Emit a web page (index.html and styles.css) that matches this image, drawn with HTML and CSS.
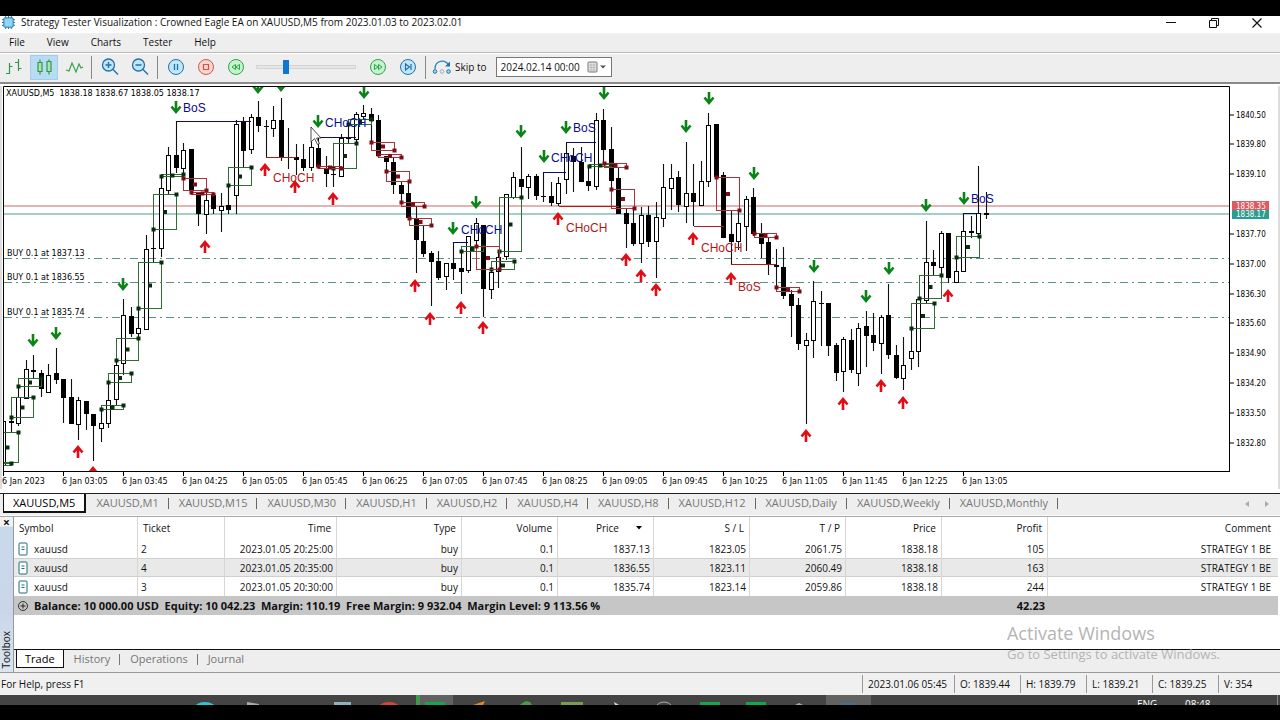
FILE: index.html
```html
<!DOCTYPE html>
<html lang="en">
<head>
<meta charset="utf-8">
<title>Strategy Tester Visualization</title>
<link rel="stylesheet" href="styles.css">
</head>
<body>
<div class="window">
  <header class="titlebar">
    <svg class="app-icon" viewBox="0 0 14 14"><path d="M4 0v14M7 0v14M10 0v14M0 4h14M0 7h14M0 10h14" stroke="#1b6c9c" stroke-width="1"/><rect x="2" y="2" width="10" height="10" rx="1" fill="#8fd6f5" stroke="#1d75a8"/></svg>
    <h1 class="title">Strategy Tester Visualization : Crowned Eagle EA on XAUUSD,M5 from 2023.01.03 to 2023.02.01</h1>
    <div class="window-buttons">
      <button class="win-btn" aria-label="Minimize"><svg viewBox="0 0 12 12"><path d="M1 5.500h10" stroke="#111"/></svg></button>
      <button class="win-btn" aria-label="Restore"><svg viewBox="0 0 12 12"><path d="M1.500 3.500h7v7h-7zM3.500 3.500v-2h7v7h-2" fill="none" stroke="#111"/></svg></button>
      <button class="win-btn" aria-label="Close"><svg viewBox="0 0 12 12"><path d="M1.500 1.500l9 9M10.500 1.500l-9 9" stroke="#111" stroke-width="1.200"/></svg></button>
    </div>
  </header>
  <nav class="menu">
    <button>File</button><button>View</button><button>Charts</button><button>Tester</button><button>Help</button>
  </nav>
  <div class="toolbar">
    <button class="tool" aria-label="Bar chart"><svg viewBox="0 0 20 20"><path d="M5.500 6v11M2 16.500h3M5.500 9.500h3M14.500 2v12M11 5.500h3M14.500 11.500h3" fill="none" stroke="#2f9a45" stroke-width="1.200"/></svg></button>
    <button class="tool active" aria-label="Candlesticks"><svg viewBox="0 0 20 20"><path d="M6 2.500v3M6 14.500v3M15 2.500v2M15 14.500v3M4 5.500h4v9H4zM13 4.500h4v10h-4z" fill="#a9e3b8" stroke="#2f9a45" stroke-width="1.200"/></svg></button>
    <button class="tool" aria-label="Line chart"><svg viewBox="0 0 20 20"><path d="M2 13l3 1 3-8 4 9 3-8 2 4 2-1" fill="none" stroke="#35a04b" stroke-width="1.200"/></svg></button>
    <span class="sep"></span>
    <button class="tool" aria-label="Zoom in"><svg viewBox="0 0 20 20"><circle cx="8.500" cy="8" r="6" fill="#bfe6fb" stroke="#2272a8" stroke-width="1.300"/><path d="M13 12.500l5 5M5.500 8h6M8.500 5v6" stroke="#2272a8" stroke-width="1.400"/></svg></button>
    <button class="tool" aria-label="Zoom out"><svg viewBox="0 0 20 20"><circle cx="8.500" cy="8" r="6" fill="#bfe6fb" stroke="#2272a8" stroke-width="1.300"/><path d="M13 12.500l5 5M5.500 8h6" stroke="#2272a8" stroke-width="1.400"/></svg></button>
    <span class="sep"></span>
    <button class="tool" aria-label="Pause"><svg viewBox="0 0 20 20"><circle cx="10" cy="10" r="7.500" fill="#bfe6fb" stroke="#2272a8"/><path d="M8.500 7v6M11.500 7v6" stroke="#2272a8" stroke-width="1.300"/></svg></button>
    <button class="tool" aria-label="Stop"><svg viewBox="0 0 20 20"><circle cx="10" cy="10" r="7.500" fill="#fbd5cf" stroke="#d2564b"/><path d="M7.500 7.500h5v5h-5z" fill="none" stroke="#d2564b" stroke-width="1.200"/></svg></button>
    <button class="tool" aria-label="Slower"><svg viewBox="0 0 20 20"><circle cx="10" cy="10" r="7.500" fill="#c4f3cd" stroke="#31a449"/><path d="M9.500 7.500v5l-3.500-2.500zM13.500 7.500v5L10 10z" fill="none" stroke="#31a449"/></svg></button>
    <input class="speed" type="range" min="0" max="100" value="28" aria-label="Speed">
    <button class="tool" aria-label="Faster"><svg viewBox="0 0 20 20"><circle cx="10" cy="10" r="7.500" fill="#c4f3cd" stroke="#31a449"/><path d="M6.500 7.500v5l3.500-2.500zM10.500 7.500v5L14 10z" fill="none" stroke="#31a449"/></svg></button>
    <button class="tool" aria-label="Step"><svg viewBox="0 0 20 20"><circle cx="10" cy="10" r="7.500" fill="#bfe6fb" stroke="#2272a8"/><path d="M7.500 7v6l4-3zM13 7v6" fill="none" stroke="#2272a8" stroke-width="1.200"/></svg></button>
    <span class="sep"></span>
    <label class="skip" for="skip-date">
      <svg viewBox="0 0 20 16"><path d="M3 10C3 1 13 0 16.500 6" fill="none" stroke="#2b86bb" stroke-width="1.300"/><path d="M18 2.500v5h-5z" fill="#2272a8"/><circle cx="3" cy="12.500" r="1.800" fill="#9ad8f5" stroke="#2272a8"/><circle cx="10" cy="12.500" r="1.800" fill="#eee" stroke="#aaa"/><circle cx="16.500" cy="12.500" r="1.800" fill="#9ad8f5" stroke="#2272a8"/></svg>
      Skip to</label>
    <div class="date-box">
      <input id="skip-date" type="text" value="2024.02.14 00:00">
      <button class="date-open" aria-label="Open calendar"><svg viewBox="0 0 20 12"><rect x="1" y="1" width="9" height="10" rx="1" fill="#e4e4e4" stroke="#777"/><path d="M2.500 4h6M2.500 6.500h6M2.500 9h6M4 2.500v7M7 2.500v7" stroke="#aaa" stroke-width=".6"/><path d="M13 4.500h6l-3 3z" fill="#555"/></svg></button>
    </div>
  </div>

  <main class="chart-pane">
    <svg id="chart" class="chart" viewBox="0 86 1280 403" role="img" aria-label="XAUUSD, M5 candlestick chart"></svg>
  </main>

  <div class="chart-tabs">
    <button class="ctab current">XAUUSD,M5</button><button class="ctab">XAUUSD,M1</button><button class="ctab">XAUUSD,M15</button><button class="ctab">XAUUSD,M30</button><button class="ctab">XAUUSD,H1</button><button class="ctab">XAUUSD,H2</button><button class="ctab">XAUUSD,H4</button><button class="ctab">XAUUSD,H8</button><button class="ctab">XAUUSD,H12</button><button class="ctab">XAUUSD,Daily</button><button class="ctab">XAUUSD,Weekly</button><button class="ctab">XAUUSD,Monthly</button>
    <div class="tab-scroll"><button aria-label="Scroll left"><svg viewBox="0 0 4 6"><path d="M4 0v6L0 3z"/></svg></button><button aria-label="Scroll right"><svg viewBox="0 0 4 6"><path d="M0 0v6l4-3z"/></svg></button></div>
  </div>

  <section class="toolbox">
    <div class="side"><button class="side-close" aria-label="Close toolbox">×</button><span class="side-title">Toolbox</span></div>
    <div class="panel">
      <table class="trades">
        <colgroup><col class="c-symbol"><col class="c-ticket"><col class="c-time"><col class="c-type"><col class="c-num"><col class="c-num"><col class="c-num"><col class="c-num"><col class="c-num"><col class="c-profit"><col></colgroup>
        <thead><tr><th class="left">Symbol</th><th class="left">Ticket</th><th>Time</th><th>Type</th><th>Volume</th><th>Price<svg class="sort" viewBox="0 0 6 4"><path d="M0 0h6L3 3.500z"/></svg></th><th>S / L</th><th>T / P</th><th>Price</th><th>Profit</th><th>Comment</th></tr></thead>
        <tbody>
          <tr><td class="left"><svg class="doc" viewBox="0 0 10 14"><rect x="1" y="1" width="8" height="12" rx="1" fill="#fff" stroke="#1f6b7b"/><path d="M3.500 5h3M3.500 7.500h3" stroke="#1f6b7b"/></svg>xauusd</td><td class="left">2</td><td>2023.01.05 20:25:00</td><td>buy</td><td>0.1</td><td>1837.13</td><td>1823.05</td><td>2061.75</td><td>1838.18</td><td>105</td><td>STRATEGY 1 BE</td></tr>
          <tr><td class="left"><svg class="doc" viewBox="0 0 10 14"><rect x="1" y="1" width="8" height="12" rx="1" fill="#fff" stroke="#1f6b7b"/><path d="M3.500 5h3M3.500 7.500h3" stroke="#1f6b7b"/></svg>xauusd</td><td class="left">4</td><td>2023.01.05 20:35:00</td><td>buy</td><td>0.1</td><td>1836.55</td><td>1823.11</td><td>2060.49</td><td>1838.18</td><td>163</td><td>STRATEGY 1 BE</td></tr>
          <tr><td class="left"><svg class="doc" viewBox="0 0 10 14"><rect x="1" y="1" width="8" height="12" rx="1" fill="#fff" stroke="#1f6b7b"/><path d="M3.500 5h3M3.500 7.500h3" stroke="#1f6b7b"/></svg>xauusd</td><td class="left">3</td><td>2023.01.05 20:30:00</td><td>buy</td><td>0.1</td><td>1835.74</td><td>1823.14</td><td>2059.86</td><td>1838.18</td><td>244</td><td>STRATEGY 1 BE</td></tr>
        </tbody>
        <tfoot><tr><td class="left" colspan="9"><svg class="plus" viewBox="0 0 10 10"><circle cx="5" cy="5" r="4.500" fill="none" stroke="#222" stroke-width=".9"/><path d="M2.500 5h5M5 2.500v5" stroke="#222"/></svg>Balance: 10 000.00 USD&nbsp; Equity: 10 042.23&nbsp; Margin: 110.19&nbsp; Free Margin: 9 932.04&nbsp; Margin Level: 9 113.56 %</td><td>42.23</td><td></td></tr></tfoot>
      </table>
      <div class="panel-tabs"><button class="ptab current">Trade</button><button class="ptab">History</button><button class="ptab">Operations</button><button class="ptab">Journal</button></div>
      <div class="watermark"><p class="wm-title">Activate Windows</p><p class="wm-text">Go to Settings to activate Windows.</p></div>
    </div>
  </section>

  <footer class="status">
    <span class="help">For Help, press F1</span>
    <span class="cell w-time">2023.01.06 05:45</span><span class="cell w-price">O: 1839.44</span><span class="cell w-price">H: 1839.79</span><span class="cell w-price">L: 1839.21</span><span class="cell w-price">C: 1839.25</span><span class="cell w-vol">V: 354</span>
  </footer>
</div>
<div class="taskbar">
  <svg viewBox="0 0 1280 10">
    <path fill="#626262" d="M417 0h36v10h-36zM826 0h45v10h-45z"/><path fill="#3f9a4c" d="M416 0h4v10h-4z"/>
    <ellipse cx="205" cy="14" rx="11" ry="7" fill="#35c3cf"/><path d="M247 7l12 2v1h-12z" fill="#aaa"/><path d="M334 7h17v3h-17z" fill="#8fb0bd"/>
    <ellipse cx="389" cy="14" rx="11" ry="7" fill="#d8453a"/><path d="M425 7h20v3h-20zM700 7h20v3h-20zM746 7h20v3h-20z" fill="#13a850"/>
    <path d="M473 10l12-4-2 4z" fill="#d98b28"/><path d="M521 9l5-3 4 1 2 3h-12z" fill="#4d9b45"/><path d="M561 7h22v3h-22z" fill="#7d9a55"/>
    <path d="M614 7l5 3h-4z" fill="#ddd"/><ellipse cx="664" cy="13" rx="8" ry="6" fill="none" stroke="#aaa"/><path d="M795 10l4-2 4 2z" fill="#aaa"/><path d="M841 8h14v2h-14z" fill="#4c6f87"/>
    <path d="M1277.500 0v10" stroke="#888"/>
    <text x="1137" y="13">ENG</text><text x="1185" y="13">08:48</text>
  </svg>
</div>
<script src="chart.js"></script>
</body>
</html>
```

FILE: styles.css
```css
* { box-sizing: border-box; }
body {
  margin: 0;
  padding: 16px 0;
  background: #000;
  color: #111;
  font: 10px/14px "Open Sans", "Noto Sans", sans-serif;
}
button, input { font: inherit; color: inherit; }
button { margin: 0; padding: 0; border: 0; background: none; }
svg { display: block; }
.window { background: #eee; }

.titlebar { display: flex; align-items: center; height: 17px; padding: 0 17px 4px 2px; background: #fff; }
.app-icon { width: 13px; height: 13px; margin-right: 6px; }
.title { flex: 1; margin: 0; font-size: 10px; font-weight: 400; line-height: 13px; }
.window-buttons { display: flex; gap: 31px; }
.win-btn svg { width: 12px; height: 12px; }

.menu { display: flex; align-items: center; gap: 22px; height: 20px; padding: 0 9px 1px; border-bottom: 1px solid #bbb; }

.toolbar { display: flex; align-items: center; height: 31px; padding-bottom: 2px; border-top: 1px solid #fff; border-bottom: 2px solid #8a8a8a; }
.tool { display: flex; align-items: center; justify-content: center; width: 28px; height: 25px; margin-right: 2px; }
.tool svg { width: 20px; height: 20px; }
.tool.active { background: #b9dcf5; box-shadow: inset 0 0 0 1px #a4cdec; }
.sep { width: 1px; height: 23px; margin: 0 4px 0 1px; background: #888; }
.speed { width: 100px; height: 20px; margin: 0 8px 0 4px; appearance: none; background: none; }
.speed::-webkit-slider-runnable-track { height: 4px; border: 1px solid #d4d4d4; background: #e6e6e6; }
.speed::-webkit-slider-thumb { appearance: none; width: 6px; height: 14px; margin-top: -6px; background: #0c78d4; }
.skip { display: flex; align-items: center; gap: 3px; margin-right: 9px; padding-left: 2px; }
.skip svg { width: 20px; height: 16px; }
.date-box { display: flex; align-items: center; width: 116px; height: 20px; border: 1px solid #777; background: #fff; }
.date-box input { flex: 1; min-width: 0; padding: 0 0 0 4px; border: 0; outline: 0; background: none; }
.date-open svg { width: 20px; height: 12px; margin-right: 4px; }

.chart-pane { padding: 2px 0 4px; background: #fff; }
.chart { width: 100%; height: auto; }
.chart text { font-family: "DejaVu Sans", sans-serif; font-size: 8px; fill: #000; }
.chart .price, .chart .tag { font-family: "DejaVu Sans Condensed", "DejaVu Sans", sans-serif; }
.chart .mark { font-family: "Liberation Sans", Arial, sans-serif; font-size: 12px; }
.chart .bull { fill: #0b0b8c; }
.chart .bear { fill: #b01818; }
.chart .tag { fill: #fff; }

.chart-tabs { display: flex; align-items: flex-start; height: 23px; padding-left: 3px; border-top: 1px solid #222; border-bottom: 1px solid #fafafa; color: #777; font-size: 11px; }
.ctab { position: relative; height: 19px; padding: 0 10px 2px; }
.ctab + .ctab::after { content: ""; position: absolute; top: 4px; right: 0; width: 1px; height: 11px; background: #666; }
.ctab.current { padding: 0 9px; border: solid #111; border-width: 0 2px 2px 1px; background: #fff; color: #000; }
.tab-scroll { display: flex; gap: 16px; margin: 7px 11px 0 auto; }
.tab-scroll svg { width: 4px; height: 6px; fill: #aaa; }

.toolbox { display: flex; border-top: 1px solid #aaa; }
.side { display: flex; flex-direction: column; align-items: center; justify-content: space-between; width: 14px; padding-bottom: 4px; border-right: 1px solid #999; background: linear-gradient(#f2f2f2 9px, #c9d9ec 10px, #c9d6e8 60%, #dbe5f0); }
.side-close { height: 10px; font-size: 12px; font-weight: 700; line-height: 9px; }
.side-title { writing-mode: vertical-rl; transform: rotate(180deg); line-height: 13px; }
.panel { position: relative; flex: 1; min-width: 0; padding-right: 2px; background: #fff; }
.trades { width: 100%; table-layout: fixed; border-collapse: separate; border-spacing: 0; }
.c-symbol { width: 124px; }
.c-ticket { width: 87px; }
.c-time { width: 112px; }
.c-type { width: 125px; }
.c-num { width: 96px; }
.c-profit { width: 106px; }
.trades th, .trades td { height: 19px; padding: 0 3px; border-right: 1px solid #d6d6d6; text-align: right; font-weight: 400; line-height: 14px; white-space: nowrap; }
.trades th { height: 22px; padding: 0 5px; }
.trades th:last-child, .trades td:last-child { padding-right: 7px; border-right: 0; }
.trades .left { text-align: left; }
.trades tbody tr:nth-child(2) td { background: #e9e9e9; box-shadow: inset 0 1px #cfcfcf, inset 0 -1px #cfcfcf; }
.trades tfoot td { height: 19px; border: 0; background: #c6c6c6; font-size: 11px; font-weight: 700; }
.sort { display: inline-block; width: 6px; height: 4px; margin: 0 6px 2px 17px; }
.doc { display: inline-block; width: 10px; height: 14px; margin: 0 6px 0 1px; vertical-align: top; }
.plus { display: inline-block; width: 10px; height: 10px; margin: 2px 6px 0 1px; vertical-align: top; }
.panel-tabs { display: flex; height: 23px; margin: 34px -2px 0 0; padding-left: 2px; border-top: 1px solid #111; background: #eee; color: #777; font-size: 11px; }
.ptab { position: relative; height: 18px; padding: 0 10px 1px; }
.ptab + .ptab:not(:last-child)::after { content: ""; position: absolute; top: 4px; right: 0; width: 1px; height: 11px; background: #777; }
.ptab.current { padding: 0 8px; border: solid #111; border-width: 0 1px 1px; background: #fff; color: #000; }
.watermark { position: absolute; right: 60px; bottom: 8px; color: #b4b4b4; }
.watermark p { margin: 0; }
.wm-title { font-size: 18px; line-height: 22px; }
.wm-text { font-size: 13px; line-height: 20px; }

.status { display: flex; align-items: center; height: 23px; border-top: 1px solid #999; background: #f0f0f0; }
.help { flex: 1; padding-left: 1px; }
.cell { padding-left: 5px; border-left: 1px solid #999; line-height: 18px; }
.w-time { width: 92px; }
.w-price { width: 66px; }
.w-vol { width: 62px; }

.taskbar { overflow: hidden; background: #444; }
.taskbar svg { width: 100%; height: auto; }
.taskbar text { font-size: 10px; fill: #fff; }
```

FILE: chart.js
```javascript
// Candle rows: high, body top, body bottom, low, filled (1) or hollow (0)
const candles = [
[421,421,465,465,0],[416,421,423,433,1],[386,397,423,426,0],[360,369,398,398,0],[355,370,372,379,1],[370,373,389,397,1],[364,375,392,392,0],[348,373,380,384,1],
[379,379,398,423,1],[379,397,424,424,1],[397,400,424,440,0],[401,401,414,430,1],[414,414,426,461,1],[410,423,428,442,0],[382,400,423,428,0],[360,365,399,406,0],
[299,315,363,375,0],[307,316,334,337,1],[290,328,333,338,0],[235,249,329,329,0],[229,248,249,263,1],[176,188,248,257,0],[147,155,190,194,0],[121,155,168,173,1],
[143,150,168,174,0],[149,149,191,191,1],[193,193,214,226,1],[190,200,214,234,0],[195,195,209,214,1],[193,206,210,232,0],[185,205,210,214,1],[120,124,195,214,0],
[117,121,151,167,1],[114,117,149,154,0],[101,117,126,132,1],[120,126,127,157,1],[106,120,128,137,0],[98,120,157,161,1],[128,157,158,169,1],[144,157,160,175,1],
[144,159,168,171,1],[142,147,167,171,0],[137,148,167,167,1],[156,168,174,187,1],[167,174,175,187,1],[134,138,176,177,0],[123,138,139,143,1],[112,114,139,143,0],
[105,113,116,119,0],[108,114,121,142,1],[115,120,156,156,1],[156,156,162,182,1],[157,162,185,194,1],[182,185,194,203,1],[181,193,218,218,1],[206,218,240,273,1],
[226,241,254,257,1],[251,253,262,306,1],[251,261,278,280,1],[263,263,276,290,0],[242,263,269,280,1],[252,268,272,294,1],[236,236,270,273,0],[218,223,240,246,0],
[225,225,289,317,1],[268,272,289,299,0],[252,257,271,288,0],[194,194,256,260,0],[172,177,197,199,0],[147,179,187,197,1],[174,176,187,199,0],[174,176,196,200,1],
[172,196,197,202,1],[182,196,203,206,1],[177,183,203,206,0],[142,153,179,194,0],[148,156,162,192,1],[147,162,182,182,1],[165,181,186,191,1],[113,120,186,190,0],
[109,120,150,163,1],[127,149,181,188,1],[167,178,214,214,1],[209,213,224,248,1],[210,223,244,246,1],[207,215,243,263,0],[206,215,242,247,1],[202,217,241,278,0],
[164,187,218,227,0],[164,178,188,210,0],[171,177,205,212,1],[142,193,206,223,0],[164,193,202,226,1],[161,181,205,205,0],[113,125,181,187,0],[124,124,177,177,1],
[172,175,238,238,1],[211,234,242,265,1],[211,223,241,250,0],[196,199,226,251,0],[188,197,234,236,1],[223,234,244,258,1],[238,242,264,275,1],[249,265,267,287,1],
[247,267,296,299,1],[290,294,306,337,1],[298,305,344,350,1],[333,340,345,424,0],[281,301,340,358,0],[291,303,304,346,1],[303,303,346,356,1],[343,345,373,381,1],
[337,339,371,392,0],[329,340,370,373,1],[323,328,373,386,0],[311,326,336,367,1],[313,335,343,351,1],[315,317,343,374,0],[284,315,355,359,1],[345,355,378,379,1],
[337,365,378,390,0],[328,351,358,370,0],[299,299,351,367,0],[221,262,300,304,0],[250,262,266,275,1],[231,233,267,275,0],[233,233,278,283,1],[257,271,282,282,0],
[213,231,271,271,0],[216,231,233,238,1],[166,213,233,238,0],[192,213,215,219,1]
];

// Gap boxes: left, top, right, bottom
const bullBoxes = [[-4,432,18,462],[-11,463,11,465],[11,397,33,417],[18,378,41,386],[101,405,123,409],[108,373,131,382],[116,338,138,360],[138,262,161,308],
[153,194,176,229],[161,174,183,176],[228,167,251,185],[333,143,356,168],[348,119,371,124],[461,246,483,251],[491,261,514,269],[499,197,521,251],[589,164,611,166],
[911,303,934,328],[919,275,941,298],[956,236,979,257]];
const bearBoxes = [[183,178,206,190],[191,192,213,194],[318,166,341,168],[371,142,394,150],[378,154,401,157],[386,171,409,181],[401,202,424,206],[409,218,431,225],
[476,246,499,269],[604,163,626,167],[611,189,634,208],[716,177,739,210],[754,233,776,237],[776,287,799,291]];

// Structure lines: x1, x2, y, colour
const navy = '#0b0b70', maroon = '#a81c1c';
const levels = [[176,251,121,navy],[266,296,157,maroon],[318,356,137,navy],[453,468,242,navy],[544,566,172,navy],[566,596,142,navy],[559,619,206,'#c01010'],[694,724,226,maroon],[731,776,264,maroon],[964,979,213,navy]];

const marks = [[183,112,'BoS','bull'],[273,182,'CHoCH','bear'],[325,127,'CHoCH','bull'],[461,234,'CHoCH','bull'],[566,232,'CHoCH','bear'],[573,132,'BoS','bull'],[551,162,'CHoCH','bull'],[701,252,'CHoCH','bear'],[738,291,'BoS','bear'],[971,203,'BoS','bull']];
const downArrows = [[33,340],[56,333],[123,284],[176,107],[258,87],[281,85],[318,121],[364,92],[453,228],[476,202],[521,131],[544,156],[566,127],[604,93],[686,126],[709,98],[754,173],[814,266],[866,296],[889,268],[926,205],[964,198]];
const upArrows = [[78,452],[93,473],[205,247],[265,170],[295,187],[333,199],[415,286],[430,319],[461,308],[483,328],[558,219],[626,260],[641,276],[656,290],[693,239],[731,279],[806,436],[843,404],[881,386],[903,403],[948,296]];
const prices = [['1840.50',115],['1839.80',144],['1839.10',174],['1837.70',234],['1837.00',264],['1836.30',294],['1835.60',323],['1834.90',353],['1834.20',383],['1833.50',413],['1832.80',443]];
const times = ['2023','03:05','03:45','04:25','05:05','05:45','06:25','07:05','07:45','08:25','09:05','09:45','10:25','11:05','11:45','12:25','13:05'];

const line = (x1, y1, x2, y2, c, extra = '') => `<path d="M${x1} ${y1}L${x2} ${y2}" stroke="${c}" fill="none" ${extra}/>`;
const square = (x, y, c) => `<rect x="${x - 2}" y="${y - 2}" width="4" height="4" fill="${c}"/>`;
let out = '<defs><clipPath id="plot"><rect x="4" y="87" width="1225" height="384"/></clipPath></defs>';
out += '<path d="M0 86h2v403H0zM1278 86h2v403h-2z" fill="#ddd"/><g clip-path="url(#plot)">';

for (const y of [258.5, 282.5, 317.5]) out += line(4, y, 1229, y, '#5d8f88', 'stroke-dasharray="8 4 2 4"');
out += line(4, 206, 1229, 206, '#c4686c') + line(4, 214, 1229, 214, '#4d9a94');

candles.forEach(([high, top, bottom, low, filled], i) => {
  const x = Math.round(3.3 + 7.5 * i);
  const style = filled ? 'fill="#000"' : 'fill="#fff" stroke="#000"';
  out += line(x + 0.5, high, x + 0.5, low, '#111', 'stroke-width="1.1"');
  out += filled
    ? `<rect x="${x - 2}" y="${top}" width="5" height="${bottom - top}" ${style}/>`
    : `<rect x="${x - 1.5}" y="${top + 0.5}" width="4" height="${bottom - top}" ${style}/>`;
});

const box = ([l, t, r, b], c, dark, rising) => {
  out += `<rect x="${l + 0.5}" y="${t + 0.5}" width="${r - l}" height="${b - t}" fill="none" stroke="${c}"/>`;
  out += square(l + 0.5, (rising ? b : t) + 0.5, dark) + square(r + 0.5, (rising ? t : b) + 0.5, dark) + square((l + r) / 2 + 0.5, (t + b) / 2 + 0.5, dark);
};
bullBoxes.forEach(b => box(b, '#2d6e35', '#082c0e', true));
bearBoxes.forEach(b => box(b, '#b03038', '#7c0d14', false));
levels.forEach(([a, b, y, c]) => { out += line(a, y + 0.5, b, y + 0.5, c); });
marks.forEach(([x, y, t, c]) => { out += `<text class="mark ${c}" x="${x}" y="${y}">${t}</text>`; });
downArrows.forEach(([x, y]) => { out += `<path transform="translate(${x} ${y})" d="M0 -6V5M-4.500 -.5L0 5L4.500 -.5" fill="none" stroke="#0a8418" stroke-width="2.600"/>`; });
upArrows.forEach(([x, y]) => { out += `<path transform="translate(${x} ${y})" d="M0 6V-5M-4.500 .5L0 -5L4.500 .5" fill="none" stroke="#e30c14" stroke-width="2.600"/>`; });
out += '<path d="M311 127v15l3.500-3.500 3 6 2-1-3-5.500h4.500z" fill="#fff" stroke="#222" stroke-width=".8"/>';
out += '</g>';

out += '<path d="M3.500 472V86.500H1229.500V472M3 471.500H1230" fill="none" stroke="#000"/>';
out += '<text x="6" y="96">XAUUSD,M5\u00a0 1838.18 1838.67 1838.05 1838.17</text>';
[['1837.13', 256], ['1836.55', 280], ['1835.74', 315]].forEach(([p, y]) => { out += `<text x="7" y="${y}">BUY 0.1 at ${p}</text>`; });
prices.forEach(([p, y]) => { out += line(1230, y, 1234, y, '#000') + `<text class="price" x="1236" y="${y + 3}">${p}</text>`; });
out += '<rect x="1232" y="201" width="37" height="9" fill="#dd5a60"/><rect x="1232" y="210" width="37" height="9" fill="#2a9d8f"/>';
out += '<text class="tag" x="1236" y="209">1838.35</text><text class="tag" x="1236" y="217">1838.17</text>';
times.forEach((t, i) => { const x = 3 + 60 * i; out += line(x + 0.5, 472, x + 0.5, 476, '#000') + `<text x="${x - 1}" y="484">6 Jan ${t}</text>`; });
document.getElementById('chart').innerHTML = out;
```
